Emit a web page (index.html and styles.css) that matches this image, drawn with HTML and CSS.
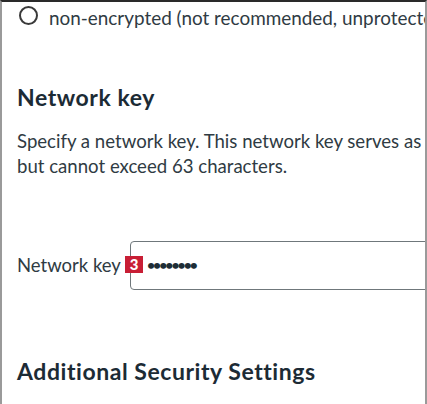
FILE: index.html
```html
<!DOCTYPE html>
<html>
<head>
<meta charset="utf-8">
<link rel="stylesheet" href="styles.css">
</head>
<body>
<div class="frame">
  <div class="radio-row">
    <span class="radio"></span>
    <span class="radio-label">non-encrypted (not recommended, unprotected)</span>
  </div>
  <h2 class="heading first">Network key</h2>
  <p class="desc">Specify a network key. This network key serves as a password and must be at least 8 characters long,<br>but cannot exceed 63 characters.</p>
  <div class="field">
    <label class="field-label">Network key</label>
    <span class="badge">3</span>
    <div class="input"><span class="dots">&bull;&bull;&bull;&bull;&bull;&bull;&bull;&bull;</span></div>
  </div>
  <h2 class="heading second">Additional Security Settings</h2>
</div>
</body>
</html>
```
FILE: styles.css
```css
html, body {
  margin: 0;
  padding: 0;
  background: #fff;
}
body {
  width: 427px;
  height: 404px;
  overflow: hidden;
}
.frame {
  box-sizing: border-box;
  width: 427px;
  height: 404px;
  border-top: 2px solid #2a2a2a;
  border-left: 2px solid #9a9a9a;
  border-right: 2px solid #9a9a9a;
  overflow: hidden;
  font-family: Lato, "Liberation Sans", sans-serif;
  color: #2f3b43;
  white-space: nowrap;
}
.radio-row {
  display: flex;
  align-items: center;
  gap: 11px;
  padding: 5px 0 0 17px;
  height: 22px;
}
.radio {
  box-sizing: border-box;
  width: 19px;
  height: 19px;
  border: 2px solid #3a3a3a;
  border-radius: 50%;
  flex: none;
  margin-top: -5px;
}
.radio-label {
  font-size: 18.9px;
  line-height: 22px;
}
.heading {
  margin: 0;
  padding-left: 15px;
  font-size: 23px;
  line-height: 28px;
  font-weight: 700;
  letter-spacing: 0.55px;
  color: #1c2b35;
}
.heading.first {
  margin-top: 54px;
}
.desc {
  margin: 18px 0 0;
  padding-left: 15px;
  font-size: 18.6px;
  line-height: 25px;
}
.field {
  display: flex;
  align-items: center;
  margin-top: 62px;
  padding-left: 15px;
  height: 49px;
}
.field-label {
  font-size: 18.5px;
  line-height: 25px;
  width: 108px;
  flex: none;
}
.badge {
  flex: none;
  width: 18px;
  height: 17px;
  background: #c81e35;
  color: #fff;
  font-weight: 900;
  font-size: 15px;
  line-height: 17px;
  text-align: center;
  margin-right: -13px;
  position: relative;
  z-index: 1;
  margin-top: -2px;
}
.input {
  flex: none;
  box-sizing: border-box;
  width: 330px;
  height: 49px;
  border: 1px solid #6f777b;
  border-radius: 4px;
  margin-right: -50px;
  display: flex;
  align-items: center;
  padding-left: 16px;
}
.dots {
  font-size: 14px;
  letter-spacing: -2px;
  font-weight: 700;
  margin-top: -2px;
  color: #1e2d36;
}
.heading.second {
  margin-top: 67px;
}
```
